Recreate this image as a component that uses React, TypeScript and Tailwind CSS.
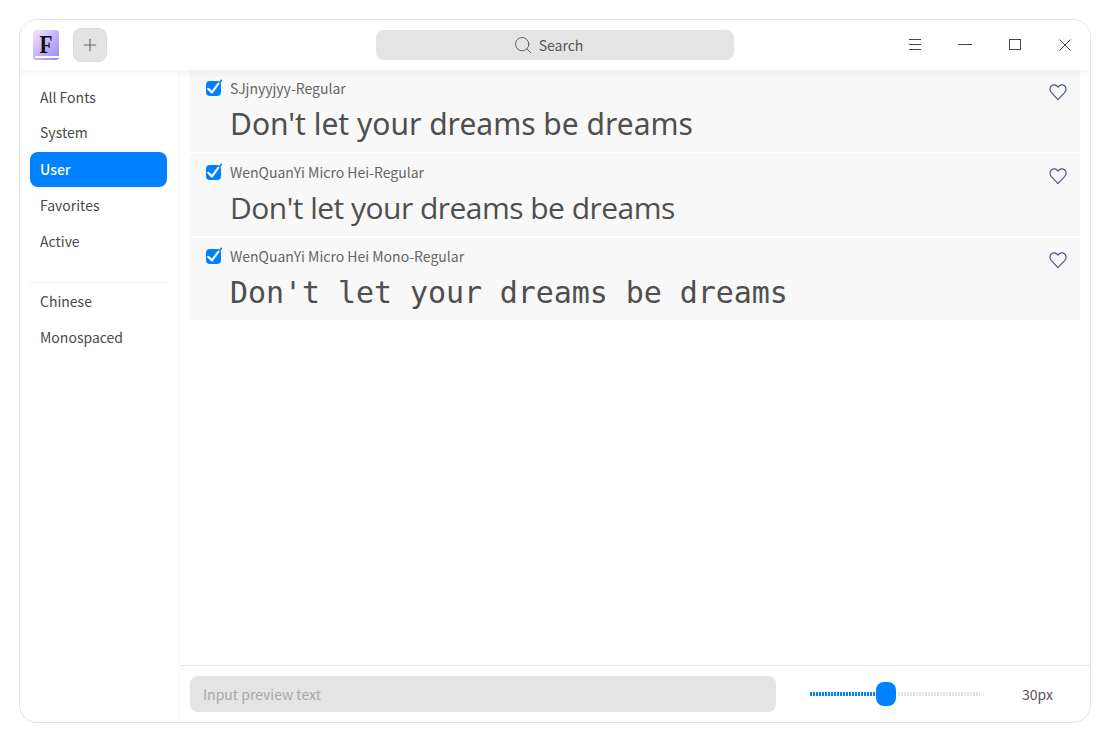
import React from 'react';
import { Search, Plus } from 'lucide-react';

const navTop = ['All Fonts', 'System', 'User', 'Favorites', 'Active'];
const navBottom = ['Chinese', 'Monospaced'];

const fonts = [
  { name: 'SJjnyyjyy-Regular', cls: "font-['Noto_Sans',sans-serif] text-[30px] mt-[2px]" },
  { name: 'WenQuanYi Micro Hei-Regular', cls: "font-['Open_Sans',sans-serif] text-[30px] tracking-[-0.52px] mt-[2px]" },
  { name: 'WenQuanYi Micro Hei Mono-Regular', cls: "font-['DejaVu_Sans_Mono',monospace] text-[30px] tracking-[-0.07px] mt-[3px]" },
];

const NavItem = ({ label }: { label: string }) => {
  if (label === 'User') {
    return <div className="h-[35px] mt-0.5 mr-px pb-0.5 flex items-center px-2.5 rounded-lg text-sm bg-[#0081ff] text-white font-medium">{label}</div>;
  }
  return <div className={`${label === 'System' ? 'h-[35px] pb-px' : 'h-9'} flex items-center px-2.5 text-sm text-[#4a4a4a]`}>{label}</div>;
};

const FontRow = ({ name, cls }: { name: string; cls: string }) => (
  <div className="relative h-[82px] bg-[#f8f8f8] pl-10 pt-[7px]">
    <div className="absolute left-[16px] top-[11px] w-[15px] h-[15px] rounded-[4px] bg-[#0081ff]">
      <svg viewBox="0 0 15 15" className="absolute top-0 left-0 w-[15px] h-[15px] overflow-visible" fill="none">
        <path d="M2.2 7.8l3.8 3.6L12.4 2.6" stroke="#fff" strokeWidth="2.2" strokeLinecap="round" strokeLinejoin="round" />
        <path d="M14 1.2l1.3-1.9" stroke="#0081ff" strokeWidth="1.6" strokeLinecap="round" />
      </svg>
    </div>
    <div className="text-sm leading-[22px] text-[#666]">{name}</div>
    <div className={`${cls} leading-[46px] text-[#4f4f4f] whitespace-nowrap`}>Don't let your dreams be dreams</div>
    <svg viewBox="0 0 18 18" className="absolute right-[13px] top-[13px] w-[18px] h-[18px]" fill="none" stroke="#4c5a80" strokeWidth="1.2" strokeLinejoin="round">
      <path d="M9 16.6L2.2 9.4C.4 7.4.6 4.4 2.5 2.8 4.4 1.3 7.4 1.6 9 4.2c1.6-2.6 4.6-2.9 6.5-1.4 1.9 1.6 2.1 4.6.3 6.6L9 16.6z" />
    </svg>
  </div>
);

export default function App() {
  return (
    <div className="w-[1110px] h-[742px] bg-white p-[19px] font-['Noto_Sans_CJK_SC','Noto_Sans',sans-serif]">
      <div className="w-[1072px] h-[704px] rounded-[18px] border border-[#e2e2e2] bg-white flex flex-col overflow-hidden">
        {/* Titlebar */}
        <div className="h-[50px] shrink-0 flex items-center relative shadow-[0_2px_8px_rgba(0,0,0,0.06)] z-10 bg-white">
          <div className="flex items-center pl-[13px] gap-[14px] w-[356px]">
            <svg viewBox="0 0 26 30" className="w-[26px] h-[30px]">
              <defs>
                <linearGradient id="bookFill" x1="0" y1="0" x2="1" y2="1">
                  <stop offset="0" stopColor="#f1e4ff" />
                  <stop offset="1" stopColor="#9a86f5" />
                </linearGradient>
              </defs>
              <rect x="0" y="0" width="26" height="30" rx="3" fill="url(#bookFill)" />
              <rect x="2" y="26" width="24" height="2" rx="1" fill="#fff" />
              <text x="6.5" y="22.7" fontFamily="Liberation Serif" fontWeight="700" fontSize="26" textLength="13" lengthAdjust="spacingAndGlyphs" fill="#111">F</text>
            </svg>
            <button className="w-[34px] h-[34px] rounded-lg bg-[#e3e3e3] border border-[#dcdcdc] flex items-center justify-center text-[#666]">
              <Plus size={20} strokeWidth={1.3} />
            </button>
          </div>
          <div className="w-[358px] h-[30px] rounded-lg bg-[#e4e4e4] flex items-center justify-center gap-[6px] pr-[14px] text-sm text-[#555]">
            <Search size={20} strokeWidth={1.1} />
            Search
          </div>
          <div className="flex-1 flex items-center justify-end pr-[19px] text-[#444]">
            <svg viewBox="0 0 12 12" className="w-3 h-3 mr-[37px]" fill="none" stroke="currentColor"><path d="M0 .5h12M0 5.5h12M0 10.5h12" /></svg>
            <svg viewBox="0 0 14 12" className="w-[14px] h-3 -mt-0.5 mr-[37px]" fill="none" stroke="currentColor"><path d="M0 6.5h14" /></svg>
            <svg viewBox="0 0 12 12" className="w-3 h-3 mr-[38px]" fill="none" stroke="currentColor"><rect x=".5" y=".5" width="11" height="10" /></svg>
            <svg viewBox="0 0 12 12" className="w-3 h-3" fill="none" stroke="currentColor"><path d="M.5.5l11 11M11.5.5l-11 11" /></svg>
          </div>
        </div>

        <div className="flex-1 flex min-h-0">
          {/* Sidebar */}
          <aside className="w-[160px] shrink-0 border-r border-[#f6f6f6] pl-[10px] pr-[11px] pt-[9px]">
            {navTop.map((n) => <NavItem key={n} label={n} />)}
            <div className="h-px bg-[#f0f0f0] mt-[23px]" />
            <div className="h-9 flex items-center px-2.5 text-sm text-[#4a4a4a]">{navBottom[0]}</div>
            <div className="h-9 flex items-center px-2.5 text-sm text-[#4a4a4a]">{navBottom[1]}</div>
          </aside>

          <main className="flex-1 flex flex-col min-w-0">
            <div className="flex-1 pl-[10px] pr-[10px] flex flex-col gap-[2px]">
              {fonts.map((f) => <FontRow key={f.name} {...f} />)}
            </div>
            {/* Bottom bar */}
            <div className="h-[57px] shrink-0 border-t border-[#e6e6e6] flex items-center pl-[10px] pb-[1px]">
              <div className="w-[586px] h-9 rounded-lg bg-[#e4e4e4] flex items-center px-[13px] text-sm text-[#a8a8a8]">Input preview text</div>
              <div className="relative ml-[34px] w-[170px] h-6 flex items-center">
                <div className="h-1 w-[68px] bg-[repeating-linear-gradient(90deg,#0081ff_0,#0081ff_2px,transparent_2px,transparent_3px)]" />
                <div className="h-1 flex-1 ml-[20px] bg-[repeating-linear-gradient(90deg,#e4e4e4_0,#e4e4e4_2px,transparent_2px,transparent_3px)]" />
                <div className="absolute left-[66px] top-0 w-5 h-6 rounded-lg bg-[#0081ff]" />
              </div>
              <div className="ml-[42px] text-sm text-[#555]">30px</div>
            </div>
          </main>
        </div>
      </div>
    </div>
  );
}
